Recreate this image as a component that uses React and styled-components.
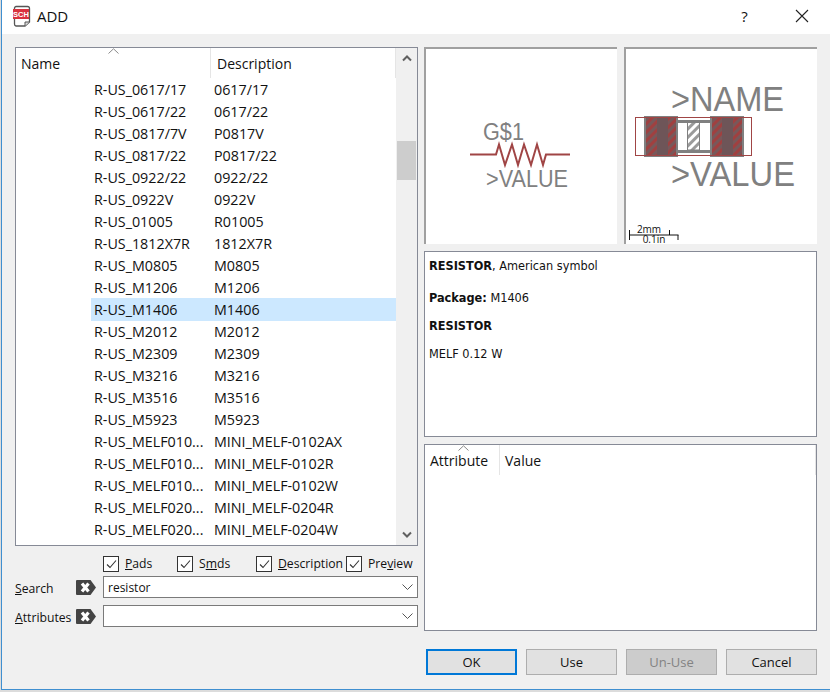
import React from "react";
import styled, { createGlobalStyle } from "styled-components";

const ROWS = [
    ["R-US_0617/17", "0617/17"],
    ["R-US_0617/22", "0617/22"],
    ["R-US_0817/7V", "P0817V"],
    ["R-US_0817/22", "P0817/22"],
    ["R-US_0922/22", "0922/22"],
    ["R-US_0922V", "0922V"],
    ["R-US_01005", "R01005"],
    ["R-US_1812X7R", "1812X7R"],
    ["R-US_M0805", "M0805"],
    ["R-US_M1206", "M1206"],
    ["R-US_M1406", "M1406"],
    ["R-US_M2012", "M2012"],
    ["R-US_M2309", "M2309"],
    ["R-US_M3216", "M3216"],
    ["R-US_M3516", "M3516"],
    ["R-US_M5923", "M5923"],
    ["R-US_MELF010...", "MINI_MELF-0102AX"],
    ["R-US_MELF010...", "MINI_MELF-0102R"],
    ["R-US_MELF010...", "MINI_MELF-0102W"],
    ["R-US_MELF020...", "MINI_MELF-0204R"],
    ["R-US_MELF020...", "MINI_MELF-0204W"],
];

const SELECTED = "R-US_M1406";

const AppIcon = () => (
    <svg width="18" height="22" viewBox="0 0 18 22">
        <path d="M3 1.500h11.500a2 2 0 0 1 2 2V17l-4.500 4H3a2 2 0 0 1-1.500-2V3a2 2 0 0 1 1.500-1.500z" fill="#fff" stroke="#555" strokeWidth="1.3" />
        <path d="M12 21v-4h4.500" fill="#ddd" stroke="#555" strokeWidth="1" />
        <rect x="0" y="4" width="16" height="10" fill="#d9333f" />
        <text x="8" y="12" textAnchor="middle" fontFamily="Liberation Sans" fontSize="7.500" fontWeight="700" fill="#fff">SCH</text>
    </svg>
);

const CloseIcon = () => (
    <svg width="14" height="14" viewBox="0 0 14 14">
        <path d="M1 1l12 12M13 1L1 13" stroke="#222" strokeWidth="1.100" fill="none" />
    </svg>
);

const SortCaret = () => (
    <svg width="11" height="6" viewBox="0 0 11 6">
        <path d="M0.500 5.500L5.500 0.800l5 4.700" stroke="#8a8a8a" strokeWidth="1" fill="none" />
    </svg>
);

const ScrollArrow = ({ down }) => (
    <svg width="10" height="7" viewBox="0 0 10 7">
        <path d={down ? "M1 1.500l4 4 4-4" : "M1 5.500l4-4 4 4"} stroke="#606060" strokeWidth="2" fill="none" />
    </svg>
);

const Chevron = () => (
    <svg width="11" height="6" viewBox="0 0 11 6">
        <path d="M0.500 0.500l5 5 5-5" stroke="#555" strokeWidth="1" fill="none" />
    </svg>
);

const Tick = () => (
    <svg width="14" height="14" viewBox="0 0 14 14">
        <path d="M3 7.500l3 3 6-7" stroke="#333" strokeWidth="1.100" fill="none" />
    </svg>
);

const ClearIcon = () => (
    <svg width="20" height="15" viewBox="0 0 20 15">
        <path d="M1 0h13.500l5.500 7.500L14.500 15H1a1 1 0 0 1-1-1V1a1 1 0 0 1 1-1z" fill="#444" />
        <path d="M6 3.500l6.500 8M12.500 3.500l-6.500 8" stroke="#fff" strokeWidth="3.200" fill="none" />
    </svg>
);

const SymbolDrawing = () => (
    <svg width="191" height="195" viewBox="426 49 191 195">
        <text x="483" y="140" fontFamily="Liberation Sans" fontSize="23" fill="#808080" textLength="41" lengthAdjust="spacingAndGlyphs">G$1</text>
        <text x="486" y="187" fontFamily="Liberation Sans" fontSize="23" fill="#808080" textLength="82" lengthAdjust="spacingAndGlyphs">&gt;VALUE</text>
        <path d="M470 154.500H496L499 144.500L505 165L512 144.500L518 165L524 144.500L531 165L537 144.500L543 165L546 154.500H570" stroke="#a04545" strokeWidth="2" fill="none" />
    </svg>
);

const FootprintDrawing = () => (
    <svg width="191" height="195" viewBox="626 49 191 195">
        <defs>
            <pattern id="padHatch" width="6" height="6" patternUnits="userSpaceOnUse" patternTransform="rotate(45)">
                <rect width="6" height="6" fill="#a04040" />
                <rect width="3" height="6" fill="#78585a" />
            </pattern>
            <pattern id="bodyHatch" width="6" height="6" patternUnits="userSpaceOnUse" patternTransform="rotate(45)">
                <rect width="6" height="6" fill="#fff" />
                <rect width="3" height="6" fill="#9a9a9a" />
            </pattern>
        </defs>
        <text x="671" y="111" fontFamily="Liberation Sans" fontSize="35" fill="#808080" textLength="113" lengthAdjust="spacingAndGlyphs">&gt;NAME</text>
        <text x="671" y="186" fontFamily="Liberation Sans" fontSize="35" fill="#808080" textLength="124" lengthAdjust="spacingAndGlyphs">&gt;VALUE</text>
        <rect x="645" y="118" width="31" height="37" fill="url(#padHatch)" />
        <rect x="712" y="118" width="31" height="37" fill="url(#padHatch)" />
        <rect x="657" y="118" width="11" height="37" fill="#6e5558" />
        <rect x="722" y="118" width="11" height="37" fill="#6e5558" />
        <rect x="645" y="117" width="32" height="39" fill="none" stroke="#808080" strokeWidth="2" />
        <rect x="711" y="117" width="32" height="39" fill="none" stroke="#808080" strokeWidth="2" />
        <path d="M677 121.500h34M677 151.500h34" stroke="#808080" strokeWidth="3" />
        <rect x="687.500" y="122.500" width="12" height="27.500" fill="url(#bodyHatch)" stroke="#808080" strokeWidth="1" />
        <rect x="635.500" y="117.500" width="116" height="38" fill="none" stroke="#a04545" strokeWidth="1" />
        <path d="M629.500 230v10M629 235h49.500M669.500 230v5M678 235v5" stroke="#111" strokeWidth="1" fill="none" />
        <text x="649" y="233" textAnchor="middle" fontFamily="Open Sans" fontSize="10" fill="#111">2mm</text>
        <text x="654" y="243" textAnchor="middle" fontFamily="Open Sans" fontSize="10" fill="#111">0.1in</text>
    </svg>
);

export default function App() {
    return (
        <>
            <GlobalStyle />
            <Window>
                <TitleBar>
                    <TitleIcon><AppIcon /></TitleIcon>
                    <Title>ADD</Title>
                    <HelpButton>?</HelpButton>
                    <CloseButton><CloseIcon /></CloseButton>
                </TitleBar>
                <Main>
                    <LeftColumn>
                        <ListBox>
                            <ListContent>
                                <ListHeader>
                                    <NameHeading>
                                        Name
                                        <CaretSlot $left={92}><SortCaret /></CaretSlot>
                                    </NameHeading>
                                    <DescHeading>Description</DescHeading>
                                </ListHeader>
                                {ROWS.map(([name, desc], i) => (
                                    <Row key={i} $selected={name === SELECTED}>
                                        <NameCell>{name}</NameCell>
                                        <DescCell>{desc}</DescCell>
                                    </Row>
                                ))}
                            </ListContent>
                            <ScrollBar>
                                <ScrollButton><ScrollArrow /></ScrollButton>
                                <ScrollThumb />
                                <ScrollButton $end><ScrollArrow down /></ScrollButton>
                            </ScrollBar>
                        </ListBox>
                        <CheckRow>
                            <CheckItem><CheckBox><Tick /></CheckBox><span><u>P</u>ads</span></CheckItem>
                            <CheckItem><CheckBox><Tick /></CheckBox><span>S<u>m</u>ds</span></CheckItem>
                            <CheckItem><CheckBox><Tick /></CheckBox><span><u>D</u>escription</span></CheckItem>
                            <CheckItem><CheckBox><Tick /></CheckBox><span>Pre<u>v</u>iew</span></CheckItem>
                        </CheckRow>
                        <SearchRow>
                            <FieldLabel><u>S</u>earch</FieldLabel>
                            <ClearSlot><ClearIcon /></ClearSlot>
                            <Combo>resistor<ComboArrow><Chevron /></ComboArrow></Combo>
                        </SearchRow>
                        <AttributesRow>
                            <FieldLabel><u>A</u>ttributes</FieldLabel>
                            <ClearSlot><ClearIcon /></ClearSlot>
                            <Combo><ComboArrow><Chevron /></ComboArrow></Combo>
                        </AttributesRow>
                    </LeftColumn>
                    <RightColumn>
                        <PreviewRow>
                            <PreviewPane><SymbolDrawing /></PreviewPane>
                            <PreviewPane><FootprintDrawing /></PreviewPane>
                        </PreviewRow>
                        <InfoBox>
                            <InfoLine $gap={15}><b>RESISTOR</b>, American symbol</InfoLine>
                            <InfoLine $gap={11}><b>Package:</b> M1406</InfoLine>
                            <InfoLine $gap={11}><b>RESISTOR</b></InfoLine>
                            <InfoLine>MELF 0.12 W</InfoLine>
                        </InfoBox>
                        <AttributeBox>
                            <AttributeHeader>
                                <AttributeHeading>
                                    Attribute
                                    <CaretSlot $left={33}><SortCaret /></CaretSlot>
                                </AttributeHeading>
                                <ValueHeading>Value</ValueHeading>
                            </AttributeHeader>
                        </AttributeBox>
                    </RightColumn>
                </Main>
                <Footer>
                    <DialogButton $primary>OK</DialogButton>
                    <DialogButton>Use</DialogButton>
                    <DialogButton disabled>Un-Use</DialogButton>
                    <DialogButton>Cancel</DialogButton>
                </Footer>
            </Window>
        </>
    );
}

const GlobalStyle = createGlobalStyle`
    html, body {
        margin: 0;
        padding: 0;
        height: 692px;
        overflow: hidden;
        background: #dcdcdc;
    }
    body {
        font-family: "Open Sans", "Noto Sans", sans-serif;
        font-size: 14.3px;
        color: #111;
    }
`;

const Window = styled.div`
    box-sizing: border-box;
    width: 829px;
    height: 690px;
    margin-left: 1px;
    border-left: 1px solid #3f8fd0;
    border-bottom: 1px solid #3f8fd0;
    background: #f0f0f0;
`;

const TitleBar = styled.div`
    box-sizing: border-box;
    display: flex;
    align-items: center;
    height: 34px;
    background: #fff;
    padding: 0 0 3px 11px;
`;

const TitleIcon = styled.div`
    display: flex;
    width: 24px;
`;

const Title = styled.div`
    flex: 1;
    font-size: 15px;
    color: #111;
`;

const HelpButton = styled.div`
    width: 57px;
    text-align: center;
    font-size: 15px;
`;

const CloseButton = styled.div`
    display: flex;
    justify-content: center;
    width: 57px;
`;

const Main = styled.div`
    display: grid;
    grid-template-columns: 403px 393px;
    column-gap: 6px;
    padding: 13px 0 0 13px;
`;

const LeftColumn = styled.div`
    display: flex;
    flex-direction: column;
`;

const ListBox = styled.div`
    box-sizing: border-box;
    display: flex;
    height: 499px;
    border: 1px solid #868a96;
    background: #fff;
`;

const ListContent = styled.div`
    flex: 1;
    min-width: 0;
    overflow: hidden;
`;

const ListHeader = styled.div`
    display: flex;
    height: 30px;
`;

const HeaderCell = styled.div`
    position: relative;
    box-sizing: border-box;
    display: flex;
    align-items: flex-end;
    padding-bottom: 5px;
    font-size: 14px;
    border-right: 1px solid #e5e5e5;
`;

const NameHeading = styled(HeaderCell)`
    width: 195px;
    padding-left: 5px;
`;

const DescHeading = styled(HeaderCell)`
    flex: 1;
    padding-left: 6px;
`;

const CaretSlot = styled.div`
    position: absolute;
    top: 0;
    left: ${(props) => props.$left}px;
    display: flex;
`;

const Row = styled.div`
    display: flex;
    align-items: center;
    height: 22.05px;
    margin-left: 75px;
    background: ${(props) => (props.$selected ? "#cce8ff" : "transparent")};
`;

const NameCell = styled.div`
    width: 120px;
    padding-left: 3px;
    box-sizing: border-box;
    white-space: nowrap;
`;

const DescCell = styled.div`
    padding-left: 3px;
    white-space: nowrap;
`;

const ScrollBar = styled.div`
    display: flex;
    flex-direction: column;
    width: 21px;
    background: #f0f0f0;
`;

const ScrollButton = styled.div`
    display: flex;
    align-items: center;
    justify-content: center;
    height: 21px;
    margin-top: ${(props) => (props.$end ? "auto" : "0")};
`;

const ScrollThumb = styled.div`
    height: 39px;
    margin: 72px 1px 0;
    background: #cdcdcd;
`;

const CheckRow = styled.div`
    display: grid;
    grid-template-columns: 74px 79px 90px 1fr;
    padding: 9px 0 0 88px;
    height: 17px;
`;

const CheckItem = styled.div`
    display: flex;
    align-items: center;
    gap: 6px;
    font-size: 12.2px;
    white-space: nowrap;
`;

const CheckBox = styled.div`
    box-sizing: border-box;
    display: flex;
    align-items: center;
    justify-content: center;
    width: 16px;
    height: 16px;
    border: 1px solid #333;
    background: #fff;
`;

const FormRow = styled.div`
    display: grid;
    grid-template-columns: 61px 27px 1fr;
    align-items: center;
    height: 22px;
`;

const SearchRow = styled(FormRow)`
    margin-top: 4px;
`;

const AttributesRow = styled(FormRow)`
    margin-top: 7px;
`;

const FieldLabel = styled.div`
    padding-top: 2px;
    font-size: 12.2px;
    white-space: nowrap;
`;

const ClearSlot = styled.div`
    display: flex;
`;

const Combo = styled.div`
    box-sizing: border-box;
    display: flex;
    align-items: center;
    height: 22px;
    padding: 0 4px;
    border: 1px solid #7a7a7a;
    background: #fff;
    font-size: 12px;
`;

const ComboArrow = styled.div`
    display: flex;
    margin-left: auto;
`;

const RightColumn = styled.div`
    display: flex;
    flex-direction: column;
    gap: 7px;
`;

const PreviewRow = styled.div`
    display: flex;
    gap: 7px;
`;

const PreviewPane = styled.div`
    box-sizing: border-box;
    display: flex;
    width: 193px;
    height: 197px;
    border-top: 2px solid #a0a0a0;
    border-left: 2px solid #a0a0a0;
    background: #fff;
    overflow: hidden;
`;

const InfoBox = styled.div`
    box-sizing: border-box;
    height: 186px;
    padding: 5px 4px;
    border: 1px solid #868a96;
    background: #fff;
    font-family: "DejaVu Sans Condensed", "DejaVu Sans", sans-serif;
    font-size: 12.6px;
`;

const InfoLine = styled.div`
    line-height: 17px;
    margin-bottom: ${(props) => props.$gap ?? 0}px;
`;

const AttributeBox = styled.div`
    box-sizing: border-box;
    height: 187px;
    border: 1px solid #868a96;
    background: #fff;
`;

const AttributeHeader = styled.div`
    display: flex;
    height: 30px;
`;

const AttributeHeading = styled(HeaderCell)`
    width: 75px;
    padding-left: 5px;
`;

const ValueHeading = styled(HeaderCell)`
    flex: 1;
    padding-left: 5px;
`;

const Footer = styled.div`
    display: flex;
    justify-content: flex-end;
    gap: 9px;
    margin-top: 18px;
    padding-right: 13px;
`;

const DialogButton = styled.div`
    box-sizing: border-box;
    display: flex;
    align-items: center;
    justify-content: center;
    width: 91px;
    height: 26px;
    font-size: 13px;
    border: ${(props) => (props.$primary ? "2px solid #0078d7" : "1px solid #adadad")};
    background: ${(props) => (props.disabled ? "#cccccc" : "#e1e1e1")};
    color: ${(props) => (props.disabled ? "#838383" : "#111")};
`;
